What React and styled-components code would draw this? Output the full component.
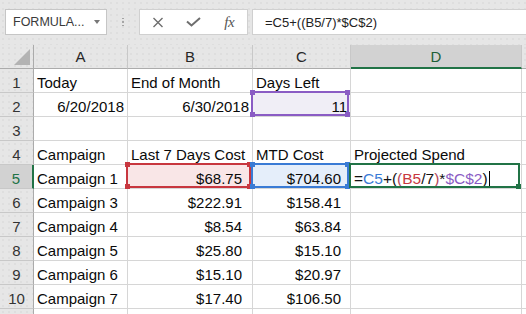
import React from 'react';
import styled, { createGlobalStyle, css } from 'styled-components';

const Global = createGlobalStyle`
  html, body { margin: 0; padding: 0; background: #fff; }
  body { width: 526px; height: 314px; overflow: hidden; font-family: "Liberation Sans", Arial, sans-serif; }
`;

const dotted = css`
  background-color: #e6e6e6;
  background-image: radial-gradient(circle, #dadada 0.6px, transparent 0.9px);
  background-size: 6px 6px;
`;

const Window = styled.div`
  width: 526px;
  height: 314px;
  overflow: hidden;
  display: flex;
  flex-direction: column;
  background: #fff;
`;

const FormulaBar = styled.div`
  ${dotted}
  height: 45px;
  flex: none;
  box-sizing: border-box;
  display: flex;
  align-items: flex-start;
  padding: 9px 0 0 5px;
`;

const NameBox = styled.div`
  width: 102px;
  height: 26px;
  box-sizing: border-box;
  background: #fff;
  border: 1px solid #c6c6c6;
  display: flex;
  align-items: center;
  justify-content: space-between;
  padding: 0 6px 0 7px;
  font-size: 12.5px;
  color: #3a3a3a;
`;

const Caret = styled.span`
  width: 0;
  height: 0;
  border-left: 3.5px solid transparent;
  border-right: 3.5px solid transparent;
  border-top: 4px solid #777;
`;

const Grip = styled.div`
  width: 32px;
  height: 26px;
  display: flex;
  flex-direction: column;
  align-items: center;
  justify-content: center;
  gap: 2px;
  & > span { width: 1.5px; height: 1.5px; background: #9a9a9a; border-radius: 50%; }
`;

const ButtonBox = styled.div`
  width: 109px;
  height: 26px;
  box-sizing: border-box;
  background: #fff;
  border: 1px solid #d0d0d0;
  display: grid;
  grid-template-columns: repeat(3, 1fr);
  align-items: center;
  justify-items: center;
`;

const Fx = styled.span`
  font-family: "Liberation Serif", "Times New Roman", serif;
  font-style: italic;
  font-size: 15px;
  color: #555;
  letter-spacing: -0.5px;
`;

const FormulaInput = styled.div`
  flex: 1;
  margin-left: 4px;
  margin-right: -2px;
  height: 26px;
  box-sizing: border-box;
  background: #fff;
  border: 1px solid #d0d0d0;
  display: flex;
  align-items: center;
  padding-left: 12px;
  font-size: 13px;
  color: #222;
`;

const Sheet = styled.div`
  display: grid;
  grid-template-columns: 34px 94px 125px 98px 171px 1fr;
  grid-auto-rows: 24px;
  flex: none;
`;

const Corner = styled.div`
  ${dotted}
  box-sizing: border-box;
  border-right: 1px solid #ababab;
  border-bottom: 1px solid #ababab;
  display: flex;
  align-items: flex-end;
  justify-content: flex-end;
  padding: 0 3px 3px 0;
  &::after {
    content: "";
    width: 0;
    height: 0;
    border-left: 16px solid transparent;
    border-bottom: 16px solid #b3b3b3;
  }
`;

const ColHead = styled.div`
  ${dotted}
  ${p => p.$active && css`background: #d2d2d2;`}
  box-sizing: border-box;
  border-right: 1px solid #c8c8c8;
  border-bottom: ${p => (p.$active ? '2px solid #217346' : '1px solid #ababab')};
  padding-top: 3px;
  text-align: center;
  font-size: 15px;
  line-height: 17px;
  color: ${p => (p.$active ? '#1d5f38' : '#262626')};
`;

const RowHead = styled.div`
  ${dotted}
  ${p => p.$active && css`background: #d2d2d2;`}
  box-sizing: border-box;
  border-right: ${p => (p.$active ? '2px solid #217346' : '1px solid #ababab')};
  border-bottom: 1px solid #c8c8c8;
  padding-top: 5px;
  text-align: center;
  font-size: 15px;
  line-height: 17px;
  color: ${p => (p.$active ? '#217346' : '#333')};
`;

const Cell = styled.div`
  position: relative;
  box-sizing: border-box;
  border-right: 1px solid #d6d6d6;
  border-bottom: 1px solid #d6d6d6;
  padding: 5px ${p => p.$pr ?? 3}px 0 3px;
  font-size: 15px;
  line-height: 17px;
  color: #0a0a0a;
  white-space: nowrap;
  text-align: ${p => (p.$right ? 'right' : 'left')};
  background: ${p => p.$fill || '#fff'};
`;

const Range = styled.div`
  position: absolute;
  z-index: 1;
  inset: -2px 1px 0 -2px;
  border: 2px solid ${p => p.$color};
  pointer-events: none;
`;

const Handle = styled.span`
  position: absolute;
  width: 5px;
  height: 5px;
  background: ${p => p.$color};
  ${p => (p.$v === 't' ? 'top: -3px;' : 'bottom: -3px;')}
  ${p => (p.$h === 'l' ? 'left: -3px;' : 'right: -3px;')}
`;

const Formula = styled.span`
  font-size: 15.5px;
`;

const Tok = styled.span`
  color: ${p => p.$c || '#111'};
`;

const Cursor = styled.span`
  display: inline-block;
  width: 1px;
  height: 17px;
  margin-left: 1px;
  background: #000;
  vertical-align: -4px;
`;

const Highlight = ({ color, corners = ['tl', 'tr', 'bl', 'br'] }) => (
  <Range $color={color}>
    {corners.map(c => (
      <Handle key={c} $color={color} $v={c[0]} $h={c[1]} />
    ))}
  </Range>
);

const PURPLE = '#8a5cc4';
const RED = '#c8373f';
const BLUE = '#3a7bd5';
const GREEN = '#217346';

const rows = [
  ['Today', 'End of Month', 'Days Left'],
  ['6/20/2018', '6/30/2018', '11'],
  ['', '', ''],
  ['Campaign', 'Last 7 Days Cost', 'MTD Cost', 'Projected Spend'],
  ['Campaign 1', '$68.75', '$704.60'],
  ['Campaign 3', '$222.91', '$158.41'],
  ['Campaign 4', '$8.54', '$63.84'],
  ['Campaign 5', '$25.80', '$15.10'],
  ['Campaign 6', '$15.10', '$20.97'],
  ['Campaign 7', '$17.40', '$106.50'],
  ['', '', ''],
];

const XIcon = () => (
  <svg width="12" height="11" viewBox="0 0 12 11">
    <path d="M1.5 1 L10.5 10 M10.5 1 L1.5 10" stroke="#6e6e6e" strokeWidth="1.4" fill="none" />
  </svg>
);

const CheckIcon = () => (
  <svg width="15" height="10" viewBox="0 0 15 10">
    <path d="M1 4.5 L5.5 8.5 L14 1" stroke="#6e6e6e" strokeWidth="2" fill="none" />
  </svg>
);

const D5Formula = () => (
  <Formula>
    <Tok>=</Tok>
    <Tok $c={BLUE}>C5</Tok>
    <Tok>+(</Tok>
    <Tok $c="#b4455a">(</Tok>
    <Tok $c={RED}>B5</Tok>
    <Tok>/7</Tok>
    <Tok $c="#b4455a">)</Tok>
    <Tok>*</Tok>
    <Tok $c={PURPLE}>$C$2</Tok>
    <Tok>)</Tok>
    <Cursor />
  </Formula>
);

export default function App() {
  return (
    <Window>
      <Global />
      <FormulaBar>
        <NameBox>
          FORMULA...
          <Caret />
        </NameBox>
        <Grip>
          <span />
          <span />
          <span />
        </Grip>
        <ButtonBox>
          <XIcon />
          <CheckIcon />
          <Fx>fx</Fx>
        </ButtonBox>
        <FormulaInput>=C5+((B5/7)*$C$2)</FormulaInput>
      </FormulaBar>
      <Sheet>
        <Corner />
        <ColHead>A</ColHead>
        <ColHead>B</ColHead>
        <ColHead>C</ColHead>
        <ColHead $active>D</ColHead>
        <ColHead />
        {rows.map((r, i) => {
          const n = i + 1;
          const money = n >= 5 && n <= 10;
          const right = n === 2 || money;
          return (
            <React.Fragment key={n}>
              <RowHead $active={n === 5}>{n <= 10 ? n : ''}</RowHead>
              <Cell $right={n === 2}>{r[0]}</Cell>
              <Cell $right={right} $pr={money ? 10 : 3} $fill={n === 5 ? '#f9e6e7' : undefined}>
                {r[1]}
                {n === 5 && <Highlight color={RED} />}
              </Cell>
              <Cell
                $right={right}
                $pr={money ? 9 : 3}
                $fill={n === 2 ? '#f0eef6' : n === 5 ? '#e5eefa' : undefined}
              >
                {r[2]}
                {n === 2 && <Highlight color={PURPLE} />}
                {n === 5 && <Highlight color={BLUE} />}
              </Cell>
              <Cell>
                {n === 5 ? <D5Formula /> : r[3]}
                {n === 5 && <Highlight color={GREEN} corners={['br']} />}
              </Cell>
              <Cell />
            </React.Fragment>
          );
        })}
      </Sheet>
    </Window>
  );
}
